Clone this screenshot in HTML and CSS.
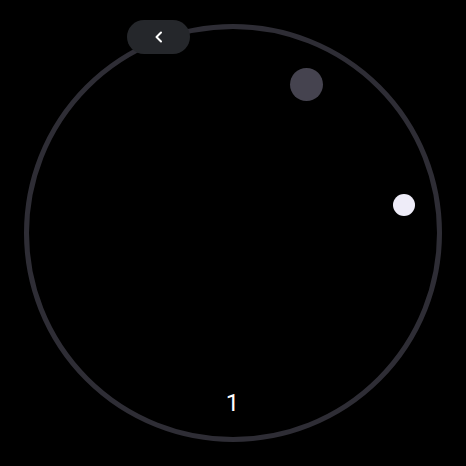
FILE: index.html
```html
<!DOCTYPE html>
<html>
<head>
<meta charset="utf-8">
<link rel="stylesheet" href="styles.css">
</head>
<body>
<div class="screen">
  <div class="dial">
    <span class="knob knob-dark"></span>
    <span class="knob knob-light"></span>
    <span class="value">1</span>
  </div>
  <button class="back" aria-label="Back">
    <svg width="10" height="12" viewBox="0 0 10 12"><path d="M7 1.5 L2.5 6 L7 10.5" fill="none" stroke="#ffffff" stroke-width="2" stroke-linecap="round" stroke-linejoin="round"/></svg>
  </button>
</div>
</body>
</html>
```
FILE: styles.css
```css
html, body {
  margin: 0;
  padding: 0;
  background: #000;
}
.screen {
  position: relative;
  width: 466px;
  height: 466px;
  background: #000;
  display: flex;
  align-items: center;
  justify-content: center;
  font-family: Roboto, "Noto Sans", sans-serif;
}
.dial {
  position: relative;
  box-sizing: border-box;
  width: 418px;
  height: 418px;
  border-radius: 50%;
  border: 5px solid #2e2d35;
  margin-left: -1px;
  margin-top: -1px;
}
.knob {
  position: absolute;
  border-radius: 50%;
}
.knob-dark {
  width: 33px;
  height: 33px;
  background: #45434f;
  left: 261px;
  top: 39px;
}
.knob-light {
  width: 22px;
  height: 22px;
  background: #eeecf8;
  left: 364px;
  top: 165px;
}
.value {
  position: absolute;
  left: 0;
  right: 0;
  top: 360px;
  text-align: center;
  color: #ffffff;
  font-size: 24px;
  font-weight: 400;
  line-height: 28px;
}
.back {
  position: absolute;
  left: 127px;
  top: 20px;
  width: 63px;
  height: 34px;
  border-radius: 17px;
  border: none;
  background: #25272b;
  padding: 0;
  display: flex;
  align-items: center;
  justify-content: center;
}
```
